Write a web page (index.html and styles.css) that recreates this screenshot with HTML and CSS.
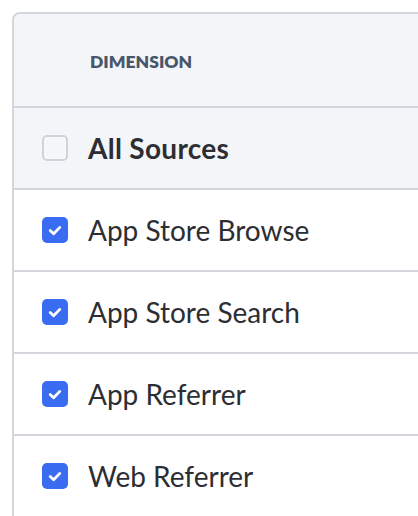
FILE: index.html
```html
<!DOCTYPE html>
<html lang="en">
<head>
<meta charset="utf-8">
<title>Dimension</title>
<link rel="stylesheet" href="styles.css">
</head>
<body>
<div class="card">
  <div class="head"><span class="head-label">DIMENSION</span></div>
  <div class="row row-all">
    <span class="box"></span>
    <span class="label label-bold">All Sources</span>
  </div>
  <div class="row">
    <span class="box box-on"><svg viewBox="0 0 26 26" width="26" height="26"><path d="M8.2 13.6 L11.6 16.8 L17.8 10.4" fill="none" stroke="#fff" stroke-width="2.8" stroke-linecap="round" stroke-linejoin="round"/></svg></span>
    <span class="label">App Store Browse</span>
  </div>
  <div class="row">
    <span class="box box-on"><svg viewBox="0 0 26 26" width="26" height="26"><path d="M8.2 13.6 L11.6 16.8 L17.8 10.4" fill="none" stroke="#fff" stroke-width="2.8" stroke-linecap="round" stroke-linejoin="round"/></svg></span>
    <span class="label">App Store Search</span>
  </div>
  <div class="row">
    <span class="box box-on"><svg viewBox="0 0 26 26" width="26" height="26"><path d="M8.2 13.6 L11.6 16.8 L17.8 10.4" fill="none" stroke="#fff" stroke-width="2.8" stroke-linecap="round" stroke-linejoin="round"/></svg></span>
    <span class="label">App Referrer</span>
  </div>
  <div class="row">
    <span class="box box-on"><svg viewBox="0 0 26 26" width="26" height="26"><path d="M8.2 13.6 L11.6 16.8 L17.8 10.4" fill="none" stroke="#fff" stroke-width="2.8" stroke-linecap="round" stroke-linejoin="round"/></svg></span>
    <span class="label">Web Referrer</span>
  </div>
</div>
</body>
</html>
```
FILE: styles.css
```css
html, body {
  margin: 0;
  padding: 0;
  background: #ffffff;
  overflow: hidden;
}
body {
  width: 418px;
  height: 516px;
  font-family: "Lato", "Noto Sans", sans-serif;
}
.card {
  margin: 12px 0 0 12px;
  width: 406px;
  box-sizing: border-box;
  border: 2px solid #d3d6db;
  border-right: none;
  border-radius: 8px 0 0 0;
  background: #ffffff;
}
.head {
  height: 92px;
  display: flex;
  align-items: center;
  padding-left: 76px;
  background: #f4f5f9;
  border-bottom: 2px solid #d3d6db;
  border-radius: 6px 0 0 0;
}
.head-label {
  font-size: 17.5px;
  font-weight: 800;
  letter-spacing: 0;
  color: #475769;
  padding-top: 2px;
}
.row {
  height: 80px;
  display: flex;
  align-items: center;
  gap: 20px;
  padding-left: 28px;
  border-bottom: 2px solid #d3d6db;
}
.row-all {
  background: #f4f5f9;
}
.box {
  width: 26px;
  height: 26px;
  box-sizing: border-box;
  border-radius: 5px;
  border: 2px solid #cfd4db;
  background: #f6f7f9;
  flex: none;
  display: flex;
}
.box-on {
  border: none;
  background: #3a6cf2;
}
.label {
  font-size: 28px;
  color: #2c2e33;
  line-height: 1;
}
.label-bold {
  font-weight: 700;
  letter-spacing: 0.3px;
}
```
